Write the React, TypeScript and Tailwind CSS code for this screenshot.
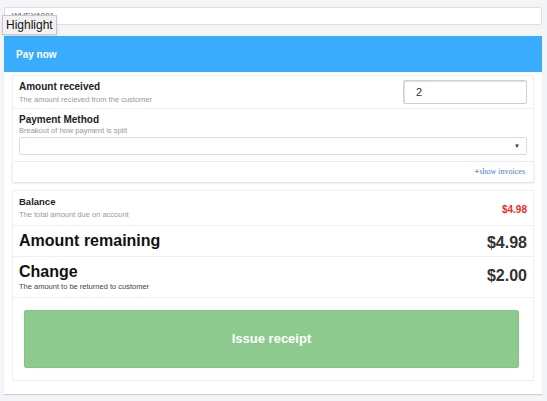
const font = { fontFamily: '"Liberation Sans", Arial, sans-serif' };

const App = () => {
  return (
    <div
      className="relative w-[547px] h-[401px] bg-[#f4f5f9] px-[4px] pt-[7px]"
      style={font}
    >
      <div className="h-[18px] w-[538px] bg-white border border-[#dedede] rounded-[2px] flex items-center px-[7px] text-[8px] text-[#555]">
        WHEYA001
      </div>
      <div className="absolute left-[2px] top-[15px] h-[20px] px-[3px] flex items-center bg-[#f2f2f2] border border-[#c8c8c8] text-[12px] text-[#111] shadow-sm">
        Highlight
      </div>

      <div className="mt-[11px] w-[538px] bg-white shadow-[0_1px_1px_rgba(0,0,0,0.15)]">
        <div className="h-[36px] bg-[#3aacfd] flex items-center px-[12px] text-white text-[10px] font-bold">
          Pay now
        </div>
        <div className="px-[8px] pt-[3px] pb-[13px]">
          <div className="border border-[#efefef]">
            <div className="h-[33px] px-[6px] flex items-center justify-between border-b border-[#f0f0f0]">
              <div className="flex flex-col">
                <span className="text-[10px] font-bold text-[#222] leading-[13px]">
                  Amount received
                </span>
                <span className="text-[7.5px] text-[#999] leading-[11px] mt-[1px]">
                  The amount recieved from the customer
                </span>
              </div>
              <div className="w-[124px] h-[24px] border border-[#cfcfcf] rounded-[2px] shadow-[inset_1px_1px_1px_rgba(0,0,0,0.12)] flex items-center px-[12px] text-[11px] text-[#333]">
                2
              </div>
            </div>
            <div className="h-[52px] px-[6px] pt-[4px]">
              <div className="text-[10px] font-bold text-[#222] leading-[13px]">
                Payment Method
              </div>
              <div className="text-[7.5px] text-[#999] leading-[10px]">
                Breakout of how payment is split
              </div>
              <div className="mt-[1px] h-[18px] border border-[#dcdcdc] rounded-[2px] flex items-center justify-end pr-[6px] text-[6px] text-[#333]">
                ▼
              </div>
            </div>
          </div>
          <div className="h-[20px] flex items-center justify-end pr-[8px] shadow-[0_1px_2px_rgba(0,0,0,0.15)] border-x border-[#f2f2f2]">
            <span
              className="text-[8px] text-[#3f7fd0]"
              style={{ fontFamily: '"Liberation Serif", "Times New Roman", serif' }}
            >
              <b className="text-[#2a6bc4] text-[9px]">+</b>show invoices
            </span>
          </div>

          <div className="mt-[8px] border border-[#efefef]">
            <div className="h-[35px] px-[6px] flex items-center justify-between border-b border-[#f0f0f0]">
              <div className="flex flex-col">
                <span className="text-[9.5px] font-bold text-[#222] leading-[12px]">
                  Balance
                </span>
                <span className="text-[7.5px] text-[#999] leading-[11px] mt-[1px]">
                  The total amount due on account
                </span>
              </div>
              <span className="text-[10px] font-bold text-[#f02a2a] mt-[2px]">
                $4.98
              </span>
            </div>
            <div className="h-[31px] px-[6px] flex items-center justify-between border-b border-[#f0f0f0]">
              <span className="text-[16px] font-bold text-[#111]">
                Amount remaining
              </span>
              <span className="text-[16px] font-bold text-[#333] mt-[3px]">
                $4.98
              </span>
            </div>
            <div className="h-[41px] px-[6px] flex items-center justify-between border-b border-[#f0f0f0]">
              <div className="flex flex-col">
                <span className="text-[16px] font-bold text-[#111] leading-[20px]">
                  Change
                </span>
                <span className="text-[7.5px] text-[#444] leading-[10px]">
                  The amount to be returned to customer
                </span>
              </div>
              <span className="text-[16px] font-bold text-[#333] mb-[2px]">
                $2.00
              </span>
            </div>
            <div className="pl-[11px] pr-[14px] py-[12px]">
              <div className="h-[58px] bg-[#8ccb8d] border border-[#84c486] rounded-[2px] flex items-center justify-center text-white text-[13px] font-bold">
                Issue receipt
              </div>
            </div>
          </div>
        </div>
      </div>
    </div>
  );
};

export default App;
